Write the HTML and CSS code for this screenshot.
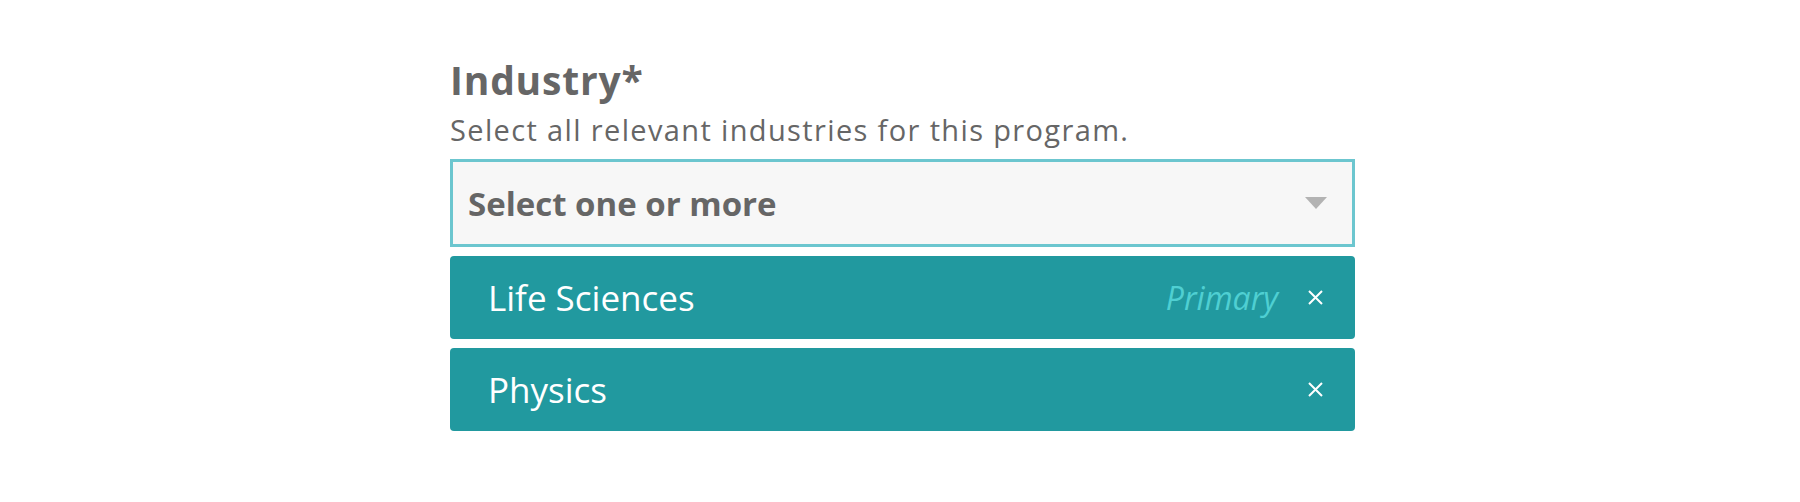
FILE: index.html
```html
<!DOCTYPE html>
<html>
<head>
<meta charset="utf-8">
<link rel="stylesheet" href="styles.css">
</head>
<body>
<div class="field">
  <div class="label">Industry*</div>
  <div class="hint">Select all relevant industries for this program.</div>
  <div class="select">
    <span class="placeholder">Select one or more</span>
    <span class="arrow"></span>
  </div>
  <div class="chips">
    <div class="chip">
      <span class="chip-name">Life Sciences</span>
      <span class="chip-tag">Primary</span>
      <svg class="chip-x" width="15" height="15" viewBox="0 0 15 15"><path d="M1 1L14 14M14 1L1 14" stroke="#fff" stroke-width="2" fill="none"/></svg>
    </div>
    <div class="chip">
      <span class="chip-name">Physics</span>
      <svg class="chip-x" width="15" height="15" viewBox="0 0 15 15"><path d="M1 1L14 14M14 1L1 14" stroke="#fff" stroke-width="2" fill="none"/></svg>
    </div>
  </div>
</div>
</body>
</html>
```

FILE: styles.css
```css
html, body {
  margin: 0;
  padding: 0;
  background: #ffffff;
}
body {
  padding-top: 56px;
}
.field {
  width: 905px;
  margin-left: 450px;
  display: flex;
  flex-direction: column;
}
.label {
  font-family: "Open Sans", sans-serif;
  font-weight: 700;
  font-size: 39px;
  line-height: 48px;
  letter-spacing: 0.8px;
  color: #666666;
}
.hint {
  font-family: "Open Sans", sans-serif;
  font-size: 29px;
  line-height: 36px;
  letter-spacing: 1.36px;
  color: #666666;
  margin-top: 8px;
}
.select {
  margin-top: 11px;
  height: 82px;
  border: 3px solid #6cc6cf;
  background: #f7f7f7;
  display: flex;
  align-items: center;
  padding: 0 25px 0 15px;
}
.placeholder {
  flex: 1;
  font-family: "Open Sans", sans-serif;
  font-weight: 700;
  font-size: 33px;
  color: #666666;
}
.arrow {
  width: 0;
  height: 0;
  border-left: 11px solid transparent;
  border-right: 11px solid transparent;
  border-top: 12px solid #b3b3b3;
}
.chips {
  margin-top: 9px;
  display: flex;
  flex-direction: column;
  gap: 9px;
}
.chip {
  height: 83px;
  background: #21999f;
  border-radius: 4px;
  display: flex;
  align-items: center;
  padding: 0 32px 0 38px;
  gap: 30px;
}
.chip-name {
  flex: 1;
  font-family: "Open Sans", sans-serif;
  font-size: 35px;
  color: #ffffff;
}
.chip-tag {
  font-family: "Open Sans", sans-serif;
  font-style: italic;
  font-size: 32px;
  color: #4fcfd2;
}
.chip-x {
  display: block;
}
```
